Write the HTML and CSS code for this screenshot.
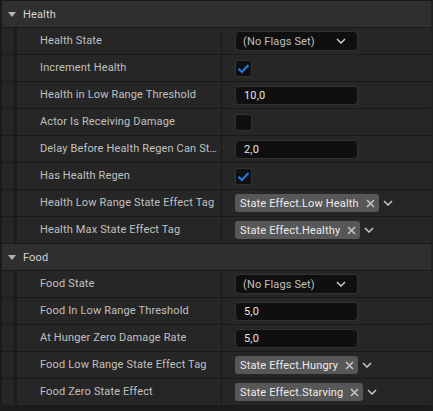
FILE: index.html
```html
<!DOCTYPE html>
<html lang="en">

<head>
    <meta charset="UTF-8">
    <meta name="viewport" content="width=device-width, initial-scale=1.0">
    <title>Details</title>
    <link rel="stylesheet" href="styles.css">
</head>

<body>
    <div class="panel">
        <!-- Health -->
        <div class="cat">
            <span class="arrow"></span>
            <span class="cat-name">Health</span>
        </div>
        <div class="row">
            <div class="indent"></div>
            <div class="name">Health State</div>
            <div class="value">
                <div class="combo">
                    <span>(No Flags Set)</span>
                    <svg class="chev" width="10" height="6" viewBox="0 0 10 6"><path d="M1 1 L5 5 L9 1" /></svg>
                </div>
            </div>
        </div>
        <div class="row">
            <div class="indent"></div>
            <div class="name">Increment Health</div>
            <div class="value">
                <div class="check"><svg width="13" height="11" viewBox="0 0 13 11"><path d="M1.5 5.8 L4.8 9 L11.5 2" /></svg></div>
            </div>
        </div>
        <div class="row">
            <div class="indent"></div>
            <div class="name">Health in Low Range Threshold</div>
            <div class="value"><div class="num">10,0</div></div>
        </div>
        <div class="row">
            <div class="indent"></div>
            <div class="name">Actor Is Receiving Damage</div>
            <div class="value"><div class="check"></div></div>
        </div>
        <div class="row">
            <div class="indent"></div>
            <div class="name" title="Delay Before Health Regen Can Start">Delay Before Health Regen Can St…</div>
            <div class="value"><div class="num">2,0</div></div>
        </div>
        <div class="row">
            <div class="indent"></div>
            <div class="name">Has Health Regen</div>
            <div class="value">
                <div class="check"><svg width="13" height="11" viewBox="0 0 13 11"><path d="M1.5 5.8 L4.8 9 L11.5 2" /></svg></div>
            </div>
        </div>
        <div class="row">
            <div class="indent"></div>
            <div class="name">Health Low Range State Effect Tag</div>
            <div class="value">
                <div class="tag">State Effect.Low Health<svg class="x" width="9" height="9" viewBox="0 0 9 9"><path d="M1 1 L8 8 M8 1 L1 8" /></svg></div>
                <svg class="chev tag-chev" width="10" height="6" viewBox="0 0 10 6"><path d="M1 1 L5 5 L9 1" /></svg>
            </div>
        </div>
        <div class="row">
            <div class="indent"></div>
            <div class="name">Health Max State Effect Tag</div>
            <div class="value">
                <div class="tag">State Effect.Healthy<svg class="x" width="9" height="9" viewBox="0 0 9 9"><path d="M1 1 L8 8 M8 1 L1 8" /></svg></div>
                <svg class="chev tag-chev" width="10" height="6" viewBox="0 0 10 6"><path d="M1 1 L5 5 L9 1" /></svg>
            </div>
        </div>

        <!-- Food -->
        <div class="cat">
            <span class="arrow"></span>
            <span class="cat-name">Food</span>
        </div>
        <div class="row">
            <div class="indent"></div>
            <div class="name">Food State</div>
            <div class="value">
                <div class="combo">
                    <span>(No Flags Set)</span>
                    <svg class="chev" width="10" height="6" viewBox="0 0 10 6"><path d="M1 1 L5 5 L9 1" /></svg>
                </div>
            </div>
        </div>
        <div class="row">
            <div class="indent"></div>
            <div class="name">Food In Low Range Threshold</div>
            <div class="value"><div class="num">5,0</div></div>
        </div>
        <div class="row">
            <div class="indent"></div>
            <div class="name">At Hunger Zero Damage Rate</div>
            <div class="value"><div class="num">5,0</div></div>
        </div>
        <div class="row">
            <div class="indent"></div>
            <div class="name">Food Low Range State Effect Tag</div>
            <div class="value">
                <div class="tag">State Effect.Hungry<svg class="x" width="9" height="9" viewBox="0 0 9 9"><path d="M1 1 L8 8 M8 1 L1 8" /></svg></div>
                <svg class="chev tag-chev" width="10" height="6" viewBox="0 0 10 6"><path d="M1 1 L5 5 L9 1" /></svg>
            </div>
        </div>
        <div class="row">
            <div class="indent"></div>
            <div class="name">Food Zero State Effect</div>
            <div class="value">
                <div class="tag">State Effect.Starving<svg class="x" width="9" height="9" viewBox="0 0 9 9"><path d="M1 1 L8 8 M8 1 L1 8" /></svg></div>
                <svg class="chev tag-chev" width="10" height="6" viewBox="0 0 10 6"><path d="M1 1 L5 5 L9 1" /></svg>
            </div>
        </div>
    </div>
</body>

</html>
```

FILE: styles.css
```css
* {
    margin: 0;
    padding: 0;
    box-sizing: border-box;
}

body {
    background: #1c1c1c;
    font-family: Roboto, "Noto Sans", sans-serif;
    font-size: 11px;
    letter-spacing: 0.15px;
    color: #c0c0c0;
}

.panel {
    width: 433px;
    border-left: 2px solid #1a1a1a;
    border-right: 2px solid #222;
    border-top: 1px solid #191919;
}

/* category header */
.cat {
    display: flex;
    align-items: center;
    height: 27px;
    padding-left: 6px;
    background: #2f2f2f;
    border-bottom: 1px solid #1a1a1a;
}

.arrow {
    width: 0;
    height: 0;
    border-left: 4.5px solid transparent;
    border-right: 4.5px solid transparent;
    border-top: 5px solid #b5b5b5;
    margin-right: 7px;
}

.cat-name {
    color: #d2d2d2;
}

/* property row */
.row {
    display: grid;
    grid-template-columns: 15px 205px 1fr;
    height: 27px;
    background: #262626;
    border-bottom: 1px solid #1a1a1a;
}

.indent {
    border-right: 3px solid #1c1c1c;
    background: #262626;
}

.name {
    padding-left: 23px;
    line-height: 26px;
    border-right: 1px solid #1b1b1b;
    white-space: nowrap;
}

.value {
    display: flex;
    align-items: center;
    padding-left: 13px;
}

.combo {
    display: flex;
    align-items: center;
    justify-content: space-between;
    width: 123px;
    height: 20px;
    padding: 0 11px 0 7px;
    background: #0f0f0f;
    border: 1px solid #323232;
    border-radius: 4px;
}

.chev path {
    fill: none;
    stroke: #c8c8c8;
    stroke-width: 1.5;
}

.check {
    display: flex;
    align-items: center;
    justify-content: center;
    width: 17px;
    height: 17px;
    background: #0f0f0f;
    border: 1px solid #323232;
    border-radius: 3px;
}

.check path {
    fill: none;
    stroke: #1f7bdc;
    stroke-width: 2.2;
}

.num {
    display: flex;
    align-items: center;
    width: 123px;
    height: 19px;
    padding-left: 8px;
    background: #0f0f0f;
    border: 1px solid #323232;
    border-radius: 4px;
    color: #e6e6e6;
}

.tag {
    display: flex;
    align-items: center;
    height: 18px;
    padding: 0 4px 0 5px;
    background: #575757;
    border-radius: 3px;
    color: #ececec;
    white-space: nowrap;
}

.x {
    margin-left: 7px;
}

.x path {
    fill: none;
    stroke: #c4c4c4;
    stroke-width: 1.6;
}

.tag-chev {
    margin-left: 4px;
}
```
